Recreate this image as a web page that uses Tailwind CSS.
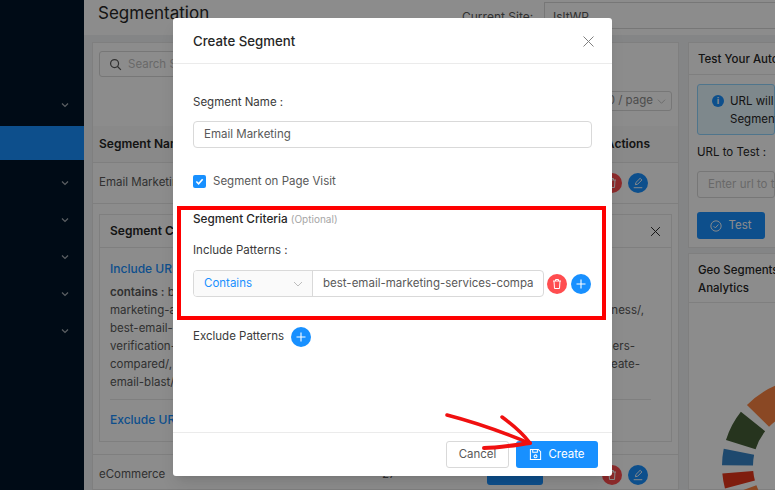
<!DOCTYPE html>
<html lang="en">
<head>
  <meta charset="UTF-8">
  <title>Segmentation</title>
  <script src="https://cdn.jsdelivr.net/npm/@tailwindcss/browser@4"></script>
</head>
<body class="font-['Inter',sans-serif] text-[11.5px] text-[#595959]">
<div class="relative w-[775px] h-[490px] overflow-hidden flex bg-[#f0f2f5]">

  <!-- sidebar -->
  <aside class="w-[84px] shrink-0 bg-[#001529] pt-[88px] flex flex-col text-[#a6adb4]">
    <div class="h-[34px] mb-[4px] flex items-center justify-end pr-[14px]">
      <svg class="w-[10px] h-[10px]" viewBox="0 0 10 10" fill="none" stroke="currentColor" stroke-width="1.2"><path d="M2 3.5l3 3 3-3"/></svg>
    </div>
    <div class="h-[34px] mb-[6px] bg-[#1890ff]"></div>
    <div class="h-[34px] mb-[3px] flex items-center justify-end pr-[14px]">
      <svg class="w-[10px] h-[10px]" viewBox="0 0 10 10" fill="none" stroke="currentColor" stroke-width="1.2"><path d="M2 3.5l3 3 3-3"/></svg>
    </div>
    <div class="h-[34px] mb-[3px] flex items-center justify-end pr-[14px]">
      <svg class="w-[10px] h-[10px]" viewBox="0 0 10 10" fill="none" stroke="currentColor" stroke-width="1.2"><path d="M2 3.5l3 3 3-3"/></svg>
    </div>
    <div class="h-[34px] mb-[3px] flex items-center justify-end pr-[14px]">
      <svg class="w-[10px] h-[10px]" viewBox="0 0 10 10" fill="none" stroke="currentColor" stroke-width="1.2"><path d="M2 3.5l3 3 3-3"/></svg>
    </div>
    <div class="h-[34px] mb-[3px] flex items-center justify-end pr-[14px]">
      <svg class="w-[10px] h-[10px]" viewBox="0 0 10 10" fill="none" stroke="currentColor" stroke-width="1.2"><path d="M2 3.5l3 3 3-3"/></svg>
    </div>
    <div class="h-[34px] flex items-center justify-end pr-[14px]">
      <svg class="w-[10px] h-[10px]" viewBox="0 0 10 10" fill="none" stroke="currentColor" stroke-width="1.2"><path d="M2 3.5l3 3 3-3"/></svg>
    </div>
  </aside>

  <main class="flex-1 min-w-0 flex flex-col">
    <!-- page header -->
    <header class="h-[35px] shrink-0 bg-white pl-[14px] flex items-start">
      <h1 class="text-[17px] leading-[26px] text-[#262626] w-[364px]">Segmentation</h1>
      <span class="mt-[9px] text-[12px] leading-[16px] w-[82px]">Current Site:</span>
      <div class="mt-[2px] flex-1 h-[27px] border border-[#d9d9d9] border-r-0 pl-[8px] pt-[5px] text-[12px]">IsltWP</div>
    </header>

    <div class="flex gap-[9px] pl-[8px] pt-[7px]">
      <!-- segments table -->
      <section class="w-[587px] shrink-0 h-[448px] bg-white border border-[#e8e8e8]">
        <div class="h-[83px] px-[6px] pt-[8px] relative">
          <div class="w-[300px] h-[26px] pt-[1px] border border-[#d9d9d9] rounded-[3px] flex items-center pl-[9px] gap-[6px] text-[#bfbfbf]">
            <svg class="w-[13px] h-[13px] text-[#595959]" viewBox="0 0 14 14" fill="none" stroke="currentColor" stroke-width="1.3"><circle cx="6" cy="6" r="4.3"/><path d="M9.2 9.2l3.6 3.6"/></svg>
            <span>Search Segment</span>
          </div>
          <div class="absolute right-[6px] top-[48px] w-[80px] h-[20px] border border-[#d9d9d9] rounded-[3px] flex items-center justify-end pr-[5px] gap-[4px] text-[#8c8c8c]">
            <span>10 / page</span>
            <svg class="w-[9px] h-[9px]" viewBox="0 0 10 10" fill="none" stroke="#bfbfbf" stroke-width="1"><path d="M1 3l4 4 4-4"/></svg>
          </div>
        </div>
        <div class="h-[37px] bg-[#fafafa] border-b border-[#e8e8e8] pl-[6px] flex items-center justify-between font-semibold text-[12px] text-[#262626]">
          <span>Segment Name</span>
          <span class="mr-[28px]">Actions</span>
        </div>
        <div class="h-[41px] border-b border-[#e8e8e8] pl-[6px] pr-[30px] flex items-center justify-between">
          <span>Email Marketing</span>
          <div class="flex gap-[6px]">
            <span class="w-[20px] h-[20px] rounded-full bg-[#ff4d4f] flex items-center justify-center">
              <svg class="w-[12px] h-[12px]" viewBox="0 0 12 12" fill="none" stroke="white" stroke-width="1"><path d="M2 3h8M4.5 3V1.5h3V3M3 3l.5 7.5h5L9 3"/></svg>
            </span>
            <span class="w-[20px] h-[20px] rounded-full bg-[#1890ff] text-white flex items-center justify-center">
              <svg class="w-[12px] h-[12px]" viewBox="0 0 14 14" fill="none" stroke="currentColor" stroke-width="1.1"><path d="M4 9l.5-2.5L9.5 1.5l2 2-5 5zM2 12.5h10"/></svg>
            </span>
          </div>
        </div>
        <div class="mx-[6px] mt-[10px] h-[228px] border border-[#e8e8e8]">
          <div class="h-[33px] pl-[10px] pr-[10px] flex items-center justify-between border-b border-[#e8e8e8] font-semibold text-[12px] text-[#262626]">
            <span>Segment Criteria</span>
            <svg class="w-[11px] h-[11px]" viewBox="0 0 10 10" fill="none" stroke="#262626" stroke-width="0.9"><path d="M1 1l8 8M9 1l-8 8"/></svg>
          </div>
          <div class="px-[10px] pt-[12px] leading-[18px] whitespace-nowrap">
            <div class="text-[#1890ff] font-medium text-[12px] mb-[5px]">Include URL Patterns</div>
            <div class="flex justify-between"><span><b class="font-semibold">contains :</b> best-email-marketing</span></div>
            <div class="flex justify-between pr-[17px]"><span>marketing-automation</span><span>for-small-business/,</span></div>
            <div class="flex justify-between"><span>best-email-software</span></div>
            <div class="flex justify-between pr-[26px]"><span>verification-tools</span><span>email-providers-</span></div>
            <div class="flex justify-between pr-[21px]"><span>compared/, how-to</span><span>how-to-create-</span></div>
            <div>email-blast/</div>
            <div class="border-t border-[#e8e8e8] mt-[8px] mb-[11px] mr-[10px]"></div>
            <div class="text-[#1890ff] font-medium text-[12px]">Exclude URL Patterns</div>
          </div>
        </div>
        <div class="mt-[12px] border-t border-[#e8e8e8] h-[40px] pl-[6px] pr-[30px] flex items-center">
          <span class="w-[283px]">eCommerce</span>
          <span class="w-[105px]">27</span>
          <span class="w-[56px] h-[27px] mb-[6px] rounded-[3px] bg-[#1890ff] text-white flex items-center justify-center">View</span>
          <div class="ml-auto flex items-center gap-[6px]">
            <span class="w-[20px] h-[20px] rounded-full bg-[#ff4d4f] flex items-center justify-center">
              <svg class="w-[12px] h-[12px]" viewBox="0 0 12 12" fill="none" stroke="white" stroke-width="1"><path d="M2 3h8M4.5 3V1.5h3V3M3 3l.5 7.5h5L9 3"/></svg>
            </span>
            <span class="w-[20px] h-[20px] rounded-full bg-[#1890ff] text-white flex items-center justify-center">
              <svg class="w-[12px] h-[12px]" viewBox="0 0 14 14" fill="none" stroke="currentColor" stroke-width="1.1"><path d="M4 9l.5-2.5L9.5 1.5l2 2-5 5zM2 12.5h10"/></svg>
            </span>
          </div>
        </div>
      </section>

      <!-- right column -->
      <div class="flex-1 min-w-0 flex flex-col gap-[5px] whitespace-nowrap overflow-hidden">
        <section class="h-[206px] bg-white border border-[#e8e8e8] border-r-0">
          <div class="h-[32px] pl-[9px] pt-[2px] flex items-center border-b border-[#e8e8e8] font-medium text-[#262626]">Test Your Automation</div>
          <div class="pl-[8px] pt-[9px]">
            <div class="h-[51px] bg-[#e6f7ff] border border-[#91d5ff] rounded-[3px] pl-[14px] pt-[7px] leading-[18px] flex gap-[6px] text-[#262626]">
              <span class="w-[12px] h-[12px] mt-[3px] shrink-0 rounded-full bg-[#1890ff] text-white text-[9px] leading-[12px] font-bold text-center">i</span>
              <span>URL will<br>Segment</span>
            </div>
            <div class="mt-[9px] text-[#262626] leading-[16px]">URL to Test :</div>
            <div class="mt-[11px] h-[27px] border border-[#d9d9d9] rounded-[3px] pl-[10px] flex items-center text-[#bfbfbf]">Enter url to test</div>
            <div class="mt-[14px] w-[68px] h-[27px] bg-[#1890ff] rounded-[3px] text-white flex items-center justify-center gap-[6px]">
              <svg class="w-[12px] h-[12px]" viewBox="0 0 14 14" fill="none" stroke="currentColor" stroke-width="1.1"><circle cx="7" cy="7" r="6"/><path d="M4.2 7.2l2 2 3.6-4"/></svg>
              <span>Test</span>
            </div>
          </div>
        </section>
        <section class="flex-1 h-[243px] bg-white border border-[#e8e8e8] border-r-0">
          <div class="h-[49px] pl-[9px] pt-[7px] leading-[18px] border-b border-[#e8e8e8] font-medium text-[#262626]">Geo Segments<br>Analytics</div>
        </section>
      </div>
    </div>
  </main>

  <!-- donut peeking out at the bottom right -->
  <svg class="absolute inset-0 w-[775px] h-[490px]" viewBox="0 0 775 490" fill="none" stroke-width="31">
    <circle cx="809" cy="466" r="71.5" pathLength="360" stroke="#fb8443" stroke-dasharray="35.5 360" transform="rotate(224.5 809 466)"/>
    <circle cx="809" cy="466" r="71.5" pathLength="360" stroke="#456038" stroke-dasharray="21.1 360" transform="rotate(197.4 809 466)"/>
    <circle cx="809" cy="466" r="71.5" pathLength="360" stroke="#3886c8" stroke-dasharray="11 360" transform="rotate(180.5 809 466)"/>
    <circle cx="809" cy="466" r="71.5" pathLength="360" stroke="#e7351a" stroke-dasharray="10 360" transform="rotate(165 809 466)"/>
    <circle cx="809" cy="466" r="71.5" pathLength="360" stroke="#fb8443" stroke-dasharray="6 360" transform="rotate(154 809 466)"/>
  </svg>

  <!-- overlay -->
  <div class="absolute inset-0 bg-black/45"></div>

  <!-- modal -->
  <div class="absolute left-[173px] top-[18px] w-[439px] h-[458px] bg-white rounded-[3px] shadow-lg flex flex-col">
    <div class="h-[46px] pt-[2px] shrink-0 border-b border-[#ebebeb] px-[20px] flex items-center justify-between">
      <h2 class="text-[13.25px] font-medium text-[#262626]">Create Segment</h2>
      <svg class="w-[11px] h-[11px] mr-[-2px]" viewBox="0 0 11 11" fill="none" stroke="#7f7f7f" stroke-width="1"><path d="M.5.5l10 10M10.5.5l-10 10"/></svg>
    </div>
    <div class="flex-1 px-[20px] pt-[30px]">
      <label class="block leading-[16px] text-[#3a3a3a]">Segment Name :</label>
      <div class="mt-[11px] h-[27px] w-[399px] pt-[1px] border border-[#d9d9d9] rounded-[4px] pl-[10px] flex items-center">Email Marketing</div>
      <div class="mt-[26px] flex items-center gap-[7px] h-[14px]">
        <span class="w-[13px] h-[13px] bg-[#1890ff] rounded-[2px] flex items-center justify-center">
          <svg class="w-[9px] h-[9px]" viewBox="0 0 10 10" fill="none" stroke="white" stroke-width="1.8"><path d="M1.5 5l2.5 2.5 4.5-5"/></svg>
        </span>
        <span class="pt-[1px]">Segment on Page Visit</span>
      </div>
      <div class="mt-[23px] leading-[16px] text-[11.75px] font-medium text-[#262626]">Segment Criteria <span class="text-[10px] font-normal text-[#a6a6a6]">(Optional)</span></div>
      <div class="mt-[15px] leading-[16px] text-[#3a3a3a]">Include Patterns :</div>
      <div class="mt-[12px] flex items-center">
        <div class="w-[351px] h-[27px] border border-[#d9d9d9] rounded-[4px] flex items-center overflow-hidden">
          <div class="w-[119px] h-full shrink-0 bg-[#fafafa] border-r border-[#d9d9d9] pl-[10px] pr-[9px] flex items-center justify-between text-[#1890ff]">
            <span>Contains</span>
            <svg class="w-[10px] h-[10px]" viewBox="0 0 10 10" fill="none" stroke="#b5b5b5" stroke-width="0.9"><path d="M1 3l4 4 4-4"/></svg>
          </div>
          <span class="pl-[10px] whitespace-nowrap">best-email-marketing-services-compa</span>
        </div>
        <span class="ml-[3px] w-[20px] h-[20px] rounded-full bg-[#ff4d4f] flex items-center justify-center">
          <svg class="w-[12px] h-[12px]" viewBox="0 0 12 12" fill="none" stroke="white" stroke-width="1"><path d="M2 3h8M4.5 3V1.5h3V3M3 3l.5 7.5h5L9 3"/></svg>
        </span>
        <span class="ml-[4px] w-[20px] h-[20px] rounded-full bg-[#1890ff] flex items-center justify-center">
          <svg class="w-[10px] h-[10px]" viewBox="0 0 10 10" fill="none" stroke="white" stroke-width="1.1"><path d="M5 0.5v9M0.5 5h9"/></svg>
        </span>
      </div>
      <div class="mt-[30px] flex items-center gap-[7px] text-[#3a3a3a]">
        <span>Exclude Patterns</span>
        <span class="w-[20px] h-[20px] rounded-full bg-[#1890ff] flex items-center justify-center">
          <svg class="w-[10px] h-[10px]" viewBox="0 0 10 10" fill="none" stroke="white" stroke-width="1.1"><path d="M5 0.5v9M0.5 5h9"/></svg>
        </span>
      </div>
    </div>
    <div class="h-[44px] shrink-0 border-t border-[#ebebeb] pr-[14px] flex items-center justify-end gap-[7px]">
      <button class="w-[63px] h-[27px] border border-[#d9d9d9] rounded-[3px] bg-white">Cancel</button>
      <button class="w-[82px] h-[27px] rounded-[3px] bg-[#1890ff] text-white flex items-center justify-center gap-[6px]">
        <svg class="w-[13px] h-[13px]" viewBox="0 0 14 14" fill="none" stroke="currentColor" stroke-width="1.1"><path d="M1.5 1.5h8.5l2.5 2.5v8.5h-11zM4 1.5v3h5v-3"/><circle cx="7" cy="9" r="1.6"/></svg>
        <span>Create</span>
      </button>
    </div>
  </div>

  <!-- annotations on top of the screenshot -->
  <div class="absolute left-[177px] top-[206px] w-[429px] h-[114px] border-[4px] border-[#fe0000]"></div>
  <svg class="absolute inset-0 w-[775px] h-[490px] pointer-events-none" viewBox="0 0 775 490" fill="none" stroke="#f01010" stroke-linecap="round" stroke-linejoin="round">
    <path d="M447 415C470 421 505 433 529 443" stroke-width="3.5"/>
    <path d="M502 417C513 425 523 434 530 443" stroke-width="3.5"/>
    <path d="M484 448C498 448 515 445 530 443" stroke-width="4"/>
  </svg>
</div>
</body>
</html>
